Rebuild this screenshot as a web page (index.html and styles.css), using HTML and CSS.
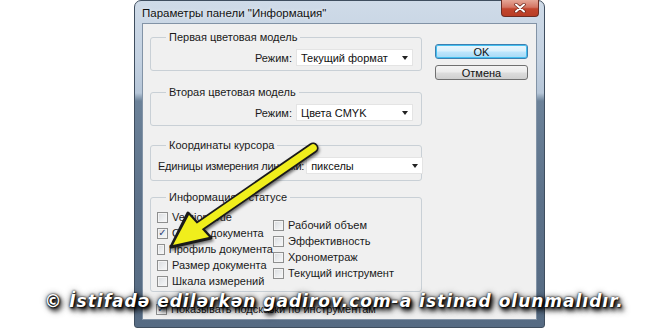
FILE: index.html
```html
<!DOCTYPE html>
<html lang="ru">
<head>
<meta charset="utf-8">
<title>Параметры панели "Информация"</title>
<link rel="stylesheet" href="styles.css">
</head>
<body>
<div class="stage">
  <div class="window">
    <div class="titlebar">
      <span class="title">Параметры панели "Информация"</span>
      <span class="close">
        <svg width="14" height="10" viewBox="0 0 14 10"><path d="M3 1.5 L11 8.5 M11 1.5 L3 8.5" stroke="#6a2418" stroke-width="3.4" stroke-linecap="round"/><path d="M3 1.5 L11 8.5 M11 1.5 L3 8.5" stroke="#fff" stroke-width="2" stroke-linecap="round"/></svg>
      </span>
    </div>
    <div class="client">
      <div class="main-col">
        <fieldset class="group g1">
          <legend>Первая цветовая модель</legend>
          <div class="row right">
            <span class="lbl">Режим:</span>
            <span class="select">Текущий формат<i class="tri"></i></span>
          </div>
        </fieldset>
        <fieldset class="group g2">
          <legend>Вторая цветовая модель</legend>
          <div class="row right">
            <span class="lbl">Режим:</span>
            <span class="select">Цвета CMYK<i class="tri"></i></span>
          </div>
        </fieldset>
        <fieldset class="group g3">
          <legend>Координаты курсора</legend>
          <div class="row spread">
            <span class="lbl tight">Единицы измерения линейки:</span>
            <span class="select">пикселы<i class="tri"></i></span>
          </div>
        </fieldset>
        <fieldset class="group g4">
          <legend>Информация о статусе</legend>
          <div class="checks">
            <div class="col left">
              <label class="chk"><span class="box"></span>Version Cue</label>
              <label class="chk"><span class="box on">✓</span>Объем документа</label>
              <label class="chk"><span class="box"></span>Профиль документа</label>
              <label class="chk"><span class="box"></span>Размер документа</label>
              <label class="chk"><span class="box"></span>Шкала измерений</label>
            </div>
            <div class="col rightcol">
              <label class="chk"><span class="box"></span>Рабочий объем</label>
              <label class="chk"><span class="box"></span>Эффективность</label>
              <label class="chk"><span class="box"></span>Хронометраж</label>
              <label class="chk"><span class="box"></span>Текущий инструмент</label>
            </div>
          </div>
        </fieldset>
        <label class="chk tips"><span class="box on">✓</span>Показывать подсказки по инструментам</label>
      </div>
      <div class="btn-col">
        <span class="btn default">OK</span>
        <span class="btn">Отмена</span>
      </div>
    </div>
  </div>

  <svg class="arrow" width="660" height="330" viewBox="0 0 660 330">
    <g class="arrow-shape">
      <line x1="313" y1="148" x2="197" y2="228" stroke="#1a1a1a" stroke-width="11" stroke-linecap="round"/>
      <polygon points="171,247 188,213 211,238" fill="#1a1a1a" stroke="#1a1a1a" stroke-width="3" stroke-linejoin="round"/>
      <line x1="313" y1="148" x2="197" y2="228" stroke="#f0ee1c" stroke-width="7.5" stroke-linecap="round"/>
      <polygon points="173,245 189,215 209,237" fill="#f0ee1c"/>
    </g>
  </svg>

  <div class="watermark">© İstifadə edilərkən gadirov.com-a istinad olunmalıdır.</div>
</div>
</body>
</html>
```

FILE: styles.css
```css
* { box-sizing: border-box; }
html, body { margin: 0; padding: 0; background: #ffffff; }
.stage {
  position: relative;
  width: 660px;
  height: 330px;
  overflow: hidden;
  font-family: "Liberation Sans", Arial, sans-serif;
  font-size: 11px;
  color: #000;
}
.window {
  margin-left: 134px;
  width: 411px;
  height: 328px;
  border: 1px solid #3f4e5f;
  border-radius: 7px 7px 3px 3px;
  background: linear-gradient(to bottom, #cfdbe8 0px, #c3d1e1 60px, #b6c6d8 92px, #6c8299 100px, #5c7189 200px, #566b83 100%);
  padding: 0 7px 7px 7px;
  display: flex;
  flex-direction: column;
}
.titlebar {
  height: 22px;
  display: flex;
  justify-content: space-between;
  align-items: flex-start;
}
.title {
  margin-top: 6px;
  font-size: 11.5px;
  color: #111;
  text-shadow: 0 0 4px rgba(255,255,255,0.8);
}
.close {
  width: 38px;
  height: 17px;
  margin-top: -1px;
  margin-right: -2px;
  border: 1px solid #6d2c22;
  border-top: none;
  border-radius: 0 0 4px 4px;
  background: linear-gradient(to bottom, #e6a797 0%, #d47563 45%, #c2452d 55%, #b83d25 100%);
  display: flex;
  align-items: center;
  justify-content: center;
}
.client {
  flex: 1;
  background: #f0f0f0;
  border: 1px solid #8293a6;
  display: flex;
  padding: 6px 0 0 7px;
}
.main-col {
  width: 272px;
  display: flex;
  flex-direction: column;
}
.group {
  margin: 0;
  border: 1px solid #c9d0d6;
  border-radius: 3px;
  padding: 5px 8px 4px 6px;
  min-width: 0;
}
.group legend {
  font-size: 11px;
  line-height: 14px;
  height: 14px;
  padding: 0 3px;
  margin-left: 9px;
  color: #1a1a1a;
}
.g2 { margin-top: 14px; }
.g3 { margin-top: 12px; padding-bottom: 6px; }
.g4 { margin-top: 9px; padding-bottom: 2px; }
.row {
  display: flex;
  align-items: center;
  height: 17px;
}
.row.right { justify-content: flex-end; gap: 4px; }
.row.spread { justify-content: space-between; padding-left: 1px; gap: 2px; }
.lbl { color: #1a1a1a; white-space: nowrap; }
.lbl.tight { letter-spacing: -0.25px; }
.select {
  flex: none;
  width: 117px;
  height: 17px;
  background: #ffffff;
  border: 1px solid #e4e4e4;
  display: flex;
  align-items: center;
  justify-content: space-between;
  padding: 0 4px 0 4px;
  color: #111;
}
.tri {
  width: 0;
  height: 0;
  border-left: 3.5px solid transparent;
  border-right: 3.5px solid transparent;
  border-top: 4px solid #222;
}
.checks { display: flex; }
.col { display: flex; flex-direction: column; }
.col.left { width: 116px; }
.col.rightcol { margin-top: 8px; }
.chk {
  height: 16px;
  display: flex;
  align-items: center;
  gap: 4px;
  white-space: nowrap;
  color: #1a1a1a;
}
.box {
  width: 11px;
  height: 11px;
  border: 1px solid #8e8f8f;
  background: linear-gradient(135deg, #d9dbde 0%, #eceef0 60%, #f8f8f8 100%);
  box-shadow: inset 0 0 0 1px #f4f4f4;
  display: flex;
  align-items: center;
  justify-content: center;
  font-size: 10px;
  line-height: 1;
  color: #2a3f7a;
  font-weight: bold;
  font-family: "DejaVu Sans", sans-serif;
}
.tips { margin-top: 9px; padding-left: 6px; }
.btn-col {
  margin-left: 13px;
  padding-top: 14px;
  display: flex;
  flex-direction: column;
  gap: 6px;
}
.btn {
  width: 93px;
  height: 15px;
  border: 1px solid #707070;
  border-radius: 3px;
  background: linear-gradient(to bottom, #f4f4f4 0%, #ebebeb 48%, #dddddd 52%, #cfcfcf 100%);
  display: flex;
  align-items: center;
  justify-content: center;
  font-size: 11px;
  color: #111;
}
.btn.default {
  border-color: #3c7fb1;
  box-shadow: inset 0 0 0 1px #45c0f0;
  background: linear-gradient(to bottom, #eaf6fd 0%, #d9f0fc 48%, #bee6fd 52%, #a7d9f5 100%);
}
.arrow {
  position: absolute;
  left: 0;
  top: 0;
  pointer-events: none;
}
.arrow-shape { filter: drop-shadow(1px 2px 1.5px rgba(0,0,0,0.55)); }
.watermark {
  position: absolute;
  left: 8px;
  right: 0;
  top: 291px;
  text-align: center;
  font-family: "DejaVu Sans", sans-serif;
  font-weight: bold;
  font-style: italic;
  font-size: 17px;
  letter-spacing: 1px;
  color: #ffffff;
  white-space: nowrap;
  text-shadow: 0 0 2px #000, 1px 1px 2px #000, 2px 3px 4px #000, 3px 4px 6px rgba(0,0,0,0.8), 0 0 6px rgba(0,0,0,0.7);
}
```
